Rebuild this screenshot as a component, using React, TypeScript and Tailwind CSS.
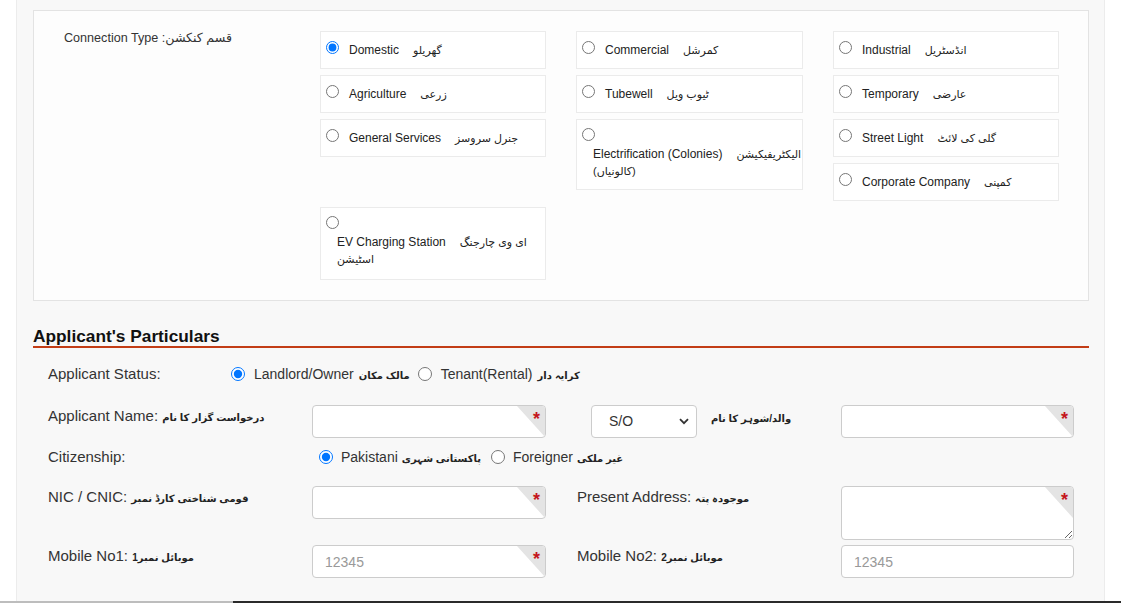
import React from 'react';

type Opt = { en: string; ur: string; ur2?: string; checked?: boolean; wrap?: boolean; h?: string };

const col1: Opt[] = [
  { en: 'Domestic', ur: 'گھریلو', checked: true },
  { en: 'Agriculture', ur: 'زرعی' },
  { en: 'General Services', ur: 'جنرل سروسز' },
];
const col2: Opt[] = [
  { en: 'Commercial', ur: 'کمرشل' },
  { en: 'Tubewell', ur: 'ٹیوب ویل' },
  { en: 'Electrification (Colonies)', ur: 'الیکٹریفیکیشن', ur2: '(کالونیاں)', wrap: true, h: 'h-[71px]' },
];
const col3: Opt[] = [
  { en: 'Industrial', ur: 'انڈسٹریل' },
  { en: 'Temporary', ur: 'عارضی' },
  { en: 'Street Light', ur: 'گلی کی لائٹ' },
  { en: 'Corporate Company', ur: 'کمپنی' },
];
const ev: Opt = { en: 'EV Charging Station', ur: 'ای وی چارجنگ', ur2: 'اسٹیشن', wrap: true, h: 'h-[73px]' };

const OptionBox: React.FC<{ o: Opt }> = ({ o }) => {
  if (o.wrap) {
    return (
      <div className={`${o.h} border border-[#ebebeb] bg-white pl-[5px] pt-[8px]`}>
        <input type="radio" name="ctype" className="m-0 block w-[13px] h-[13px]" />
        <div className="ml-[11px] mt-[5px] text-[12px] leading-[17px] text-[#222]">
          <div>
            {o.en}
            <span className="ml-[14px] text-[11px]">{o.ur}</span>
          </div>
          <div className="text-[11px]">{o.ur2}</div>
        </div>
      </div>
    );
  }
  return (
    <div className="h-[38px] border border-[#ebebeb] bg-white pl-[5px] pt-[9px] flex items-start">
      <input type="radio" name="ctype" defaultChecked={o.checked} className="m-0 w-[13px] h-[13px] shrink-0" />
      <span className="ml-[10px] mt-[2px] text-[12px] leading-[15px] text-[#222] whitespace-nowrap">{o.en}</span>
      <span className="ml-[14px] mt-[2px] text-[11px] leading-[15px] text-[#222] whitespace-nowrap">{o.ur}</span>
    </div>
  );
};

const Column: React.FC<{ items: Opt[]; w: string }> = ({ items, w }) => (
  <div className={`${w} flex flex-col gap-[6px]`}>
    {items.map((o) => (
      <OptionBox key={o.en} o={o} />
    ))}
  </div>
);

const Corner: React.FC = () => (
  <>
    <svg className="absolute top-0 right-0" width="28" height="31" viewBox="0 0 28 31">
      <polygon points="0,0 28,0 28,31" fill="#e4e4e4" />
    </svg>
    <span className="absolute top-[4px] right-[5px] text-[18px] leading-none font-bold text-[#c4161c]">*</span>
  </>
);

const TextInput: React.FC<{ placeholder?: string; required?: boolean }> = ({ placeholder, required }) => (
  <div className="relative h-[33px] rounded-[4px] border border-[#cccccc] bg-white overflow-hidden">
    <input
      placeholder={placeholder}
      className="w-full h-full bg-transparent pl-[12px] text-[14px] text-[#555] outline-none placeholder:text-[#999]"
    />
    {required && <Corner />}
  </div>
);

const Ur: React.FC<{ children: React.ReactNode }> = ({ children }) => (
  <b className="text-[10px] font-bold text-[#222]">{children}</b>
);

const Label: React.FC<{ en: string; ur: string }> = ({ en, ur }) => (
  <div className="pt-[2px] text-[15px] leading-[17px] text-[#333] whitespace-nowrap">
    {en} <Ur>{ur}</Ur>
  </div>
);

export default function App() {
  return (
    <div className="bg-white font-['Liberation_Sans','DejaVu_Sans',sans-serif]">
      <div className="ml-[16px] w-[1089px] bg-[#f8f8f8] border-x border-[#ececec] pl-[16px] pr-[15px] pt-[10px] pb-[23px]">
        {/* connection type */}
        <div className="border border-[#e3e3e3] bg-[#fdfdfd] pl-[30px] pt-[20px] pb-[20px] flex items-start">
          <div className="w-[256px] text-[12.6px] leading-[15px] text-[#333] whitespace-nowrap">
            Connection Type :قسم کنکشن
          </div>
          <div className="flex items-start gap-[30px]">
            <div className="flex flex-col">
              <Column items={col1} w="w-[226px]" />
              <div className="mt-[50px] w-[226px]">
                <OptionBox o={ev} />
              </div>
            </div>
            <Column items={col2} w="w-[227px]" />
            <Column items={col3} w="w-[226px]" />
          </div>
        </div>

        {/* applicant's particulars */}
        <h2 className="mt-[25px] text-[17.3px] leading-[20px] font-bold text-[#111] border-b-2 border-[#c33d16]">
          Applicant's Particulars
        </h2>

        <div className="mt-[14px] h-[24px] flex items-center pl-[15px] text-[#333]">
          <div className="w-[178px] text-[15px]">Applicant Status:</div>
          <input type="radio" name="status" defaultChecked className="m-0 ml-[5px] w-[14px] h-[14px]" />
          <span className="ml-[9px] text-[14px]">Landlord/Owner</span>
          <span className="ml-[5px]"><Ur>مالک مکان</Ur></span>
          <input type="radio" name="status" className="m-0 ml-[8px] w-[14px] h-[14px]" />
          <span className="ml-[9px] text-[14px]">Tenant(Rental)</span>
          <span className="ml-[5px]"><Ur>کرایہ دار</Ur></span>
        </div>

        <div className="mt-[19px] grid grid-cols-[264px_264px_264px_264px] h-[33px]">
          <div className="px-[15px]">
            <Label en="Applicant Name:" ur="درخواست گزار کا نام" />
          </div>
          <div className="px-[15px]">
            <TextInput required />
          </div>
          <div className="px-[15px] flex items-start">
            <div className="relative ml-[15px] w-[106px] h-[33px]">
              <select className="appearance-none w-full h-full rounded-[4px] border border-[#cccccc] bg-white pl-[17px] text-[14px] text-[#333] outline-none">
                <option>S/O</option>
                <option>D/O</option>
                <option>W/O</option>
              </select>
              <svg className="absolute right-[8px] top-[13px] pointer-events-none" width="10" height="7" viewBox="0 0 10 7">
                <path d="M1 1.2 L5 5.2 L9 1.2" fill="none" stroke="#333" strokeWidth="1.8" />
              </svg>
            </div>
            <span className="ml-[14px] pt-[3px] leading-[17px]"><Ur>والد/شوہر کا نام</Ur></span>
          </div>
          <div className="px-[15px] pl-[16px]">
            <TextInput required />
          </div>
        </div>

        <div className="mt-[7px] h-[24px] flex items-center pl-[15px] text-[#333]">
          <div className="w-[266px] text-[15px]">Citizenship:</div>
          <input type="radio" name="cit" defaultChecked className="m-0 ml-[5px] w-[14px] h-[14px]" />
          <span className="ml-[8px] text-[14px]">Pakistani</span>
          <span className="ml-[4px]"><Ur>پاکستانی شہری</Ur></span>
          <input type="radio" name="cit" className="m-0 ml-[10px] w-[14px] h-[14px]" />
          <span className="ml-[8px] text-[14px]">Foreigner</span>
          <span className="ml-[4px]"><Ur>غیر ملکی</Ur></span>
        </div>

        <div className="mt-[17px] grid grid-cols-[264px_264px_264px_264px]">
          <div className="px-[15px]">
            <Label en="NIC / CNIC:" ur="قومی شناختی کارڈ نمبر" />
          </div>
          <div className="px-[15px]">
            <TextInput required />
          </div>
          <div className="px-[15px] pl-[16px]">
            <Label en="Present Address:" ur="موجودہ پتہ" />
          </div>
          <div className="px-[15px] pl-[16px]">
            <div className="relative h-[54px]">
              <textarea className="block w-full h-[54px] rounded-[4px] border border-[#cccccc] bg-white pl-[12px] text-[14px] outline-none" />
              <div className="absolute inset-[1px] rounded-[3px] overflow-hidden pointer-events-none">
                <Corner />
              </div>
            </div>
          </div>
        </div>

        <div className="mt-[5px] grid grid-cols-[264px_264px_264px_264px]">
          <div className="px-[15px]">
            <Label en="Mobile No1:" ur="موبائل نمبر1" />
          </div>
          <div className="px-[15px]">
            <TextInput placeholder="12345" required />
          </div>
          <div className="px-[15px] pl-[16px]">
            <Label en="Mobile No2:" ur="موبائل نمبر2" />
          </div>
          <div className="px-[15px] pl-[16px]">
            <TextInput placeholder="12345" />
          </div>
        </div>
      </div>
      <div className="h-[2px] flex">
        <div className="w-[233px] bg-[#bdbdbd]" />
        <div className="flex-1 bg-[#2a2a2a]" />
      </div>
    </div>
  );
}
